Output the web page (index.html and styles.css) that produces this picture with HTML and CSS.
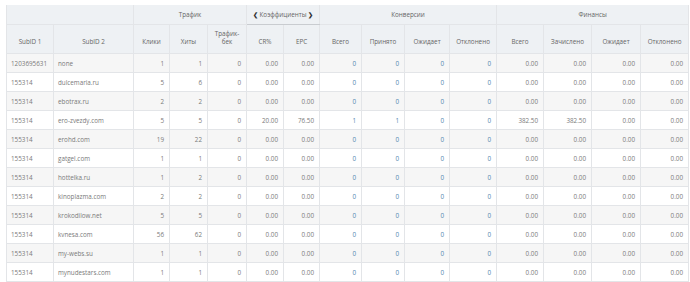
FILE: index.html
```html
<!DOCTYPE html>
<html lang="ru">
<head>
    <meta charset="UTF-8">
    <title>Статистика по SubID</title>
    <link rel="stylesheet" href="styles.css">
</head>
<body>
    <table class="stats">
        <colgroup>
            <col style="width: 47px">
            <col style="width: 80px">
            <col style="width: 36px">
            <col style="width: 38px">
            <col style="width: 39px">
            <col style="width: 37px">
            <col style="width: 36px">
            <col style="width: 42px">
            <col style="width: 43px">
            <col style="width: 45px">
            <col style="width: 47px">
            <col style="width: 47px">
            <col style="width: 48px">
            <col style="width: 49px">
            <col style="width: 48px">
        </colgroup>
        <thead>
            <tr class="group-row">
                <th colspan="2" class="blank"></th>
                <th colspan="3">Трафик</th>
                <th colspan="2" class="switch">
                    <span class="arrow">&#10094;</span> Коэффициенты <span class="arrow">&#10095;</span>
                </th>
                <th colspan="4">Конверсии</th>
                <th colspan="4">Финансы</th>
            </tr>
            <tr class="label-row">
                <th>SubID 1</th>
                <th>SubID 2</th>
                <th>Клики</th>
                <th>Хиты</th>
                <th>Трафик-<br>бек</th>
                <th>CR%</th>
                <th>EPC</th>
                <th>Всего</th>
                <th>Принято</th>
                <th>Ожидает</th>
                <th>Отклонено</th>
                <th>Всего</th>
                <th>Зачислено</th>
                <th>Ожидает</th>
                <th>Отклонено</th>
            </tr>
        </thead>
        <tbody id="rows"></tbody>
    </table>

    <script>
        const rows = [
            ['1203695631', 'none', 1, 1, 0, '0.00', '0.00', 0, 0, 0, 0, '0.00', '0.00', '0.00', '0.00'],
            ['155314', 'dulcemaria.ru', 5, 6, 0, '0.00', '0.00', 0, 0, 0, 0, '0.00', '0.00', '0.00', '0.00'],
            ['155314', 'ebotrax.ru', 2, 2, 0, '0.00', '0.00', 0, 0, 0, 0, '0.00', '0.00', '0.00', '0.00'],
            ['155314', 'ero-zvezdy.com', 5, 5, 0, '20.00', '76.50', 1, 1, 0, 0, '382.50', '382.50', '0.00', '0.00'],
            ['155314', 'erohd.com', 19, 22, 0, '0.00', '0.00', 0, 0, 0, 0, '0.00', '0.00', '0.00', '0.00'],
            ['155314', 'gatgel.com', 1, 1, 0, '0.00', '0.00', 0, 0, 0, 0, '0.00', '0.00', '0.00', '0.00'],
            ['155314', 'hottelka.ru', 1, 2, 0, '0.00', '0.00', 0, 0, 0, 0, '0.00', '0.00', '0.00', '0.00'],
            ['155314', 'kinoplazma.com', 2, 2, 0, '0.00', '0.00', 0, 0, 0, 0, '0.00', '0.00', '0.00', '0.00'],
            ['155314', 'krokodilow.net', 5, 5, 0, '0.00', '0.00', 0, 0, 0, 0, '0.00', '0.00', '0.00', '0.00'],
            ['155314', 'kvnesa.com', 56, 62, 0, '0.00', '0.00', 0, 0, 0, 0, '0.00', '0.00', '0.00', '0.00'],
            ['155314', 'my-webs.su', 1, 1, 0, '0.00', '0.00', 0, 0, 0, 0, '0.00', '0.00', '0.00', '0.00'],
            ['155314', 'mynudestars.com', 1, 1, 0, '0.00', '0.00', 0, 0, 0, 0, '0.00', '0.00', '0.00', '0.00']
        ];

        // columns 7..10 are conversion counts, shown as links
        const tbody = document.getElementById('rows');
        rows.forEach(row => {
            const tr = document.createElement('tr');
            row.forEach((value, i) => {
                const td = document.createElement('td');
                td.textContent = value;
                if (i < 2) td.className = 'text';
                else if (i >= 7 && i <= 10) td.className = 'num link';
                else td.className = 'num';
                tr.appendChild(td);
            });
            tbody.appendChild(tr);
        });
    </script>
</body>
</html>
```

FILE: styles.css
```css
:root {
    --header-bg: #eef1f4;
    --stripe-bg: #f6f6f6;
    --border-color: #e3e5e8;
    --text-color: #7a7a7a;
    --header-text: #666;
    --link-color: #4f86b0;
}

html, body {
    height: 100%;
    overflow: hidden;
}

body {
    margin: 0;
    padding: 5px 2px 0 6px;
    background: white;
    font-family: "Open Sans", sans-serif;
    font-size: 6.3px;
    color: var(--text-color);
}

.stats {
    width: 682px;
    table-layout: fixed;
    border-collapse: collapse;
}

.stats th {
    background: var(--header-bg);
    color: var(--header-text);
    font-weight: normal;
    border-left: 1px solid var(--border-color);
    border-right: 1px solid var(--border-color);
    line-height: 8px;
}

.group-row th {
    height: 19px;
    padding: 0;
    text-align: center;
    border-bottom: 1px solid var(--border-color);
}

.group-row .switch {
    border-bottom: 1px solid #c9ccd0;
    white-space: nowrap;
}

.switch .arrow {
    font-size: 6px;
    font-weight: bold;
    color: #333;
}

.label-row th {
    height: 21px;
    padding: 0 2px 7px;
    vertical-align: bottom;
    text-align: center;
}

.stats td {
    height: 19px;
    padding: 0 5px;
    border: 1px solid var(--border-color);
    white-space: nowrap;
    overflow: hidden;
    box-sizing: border-box;
}

.stats tbody tr:nth-child(odd) td {
    background: var(--stripe-bg);
}

.stats td.text {
    text-align: left;
    padding-left: 4px;
}

.stats td.num {
    text-align: right;
}

.stats td.link {
    color: var(--link-color);
}
```
